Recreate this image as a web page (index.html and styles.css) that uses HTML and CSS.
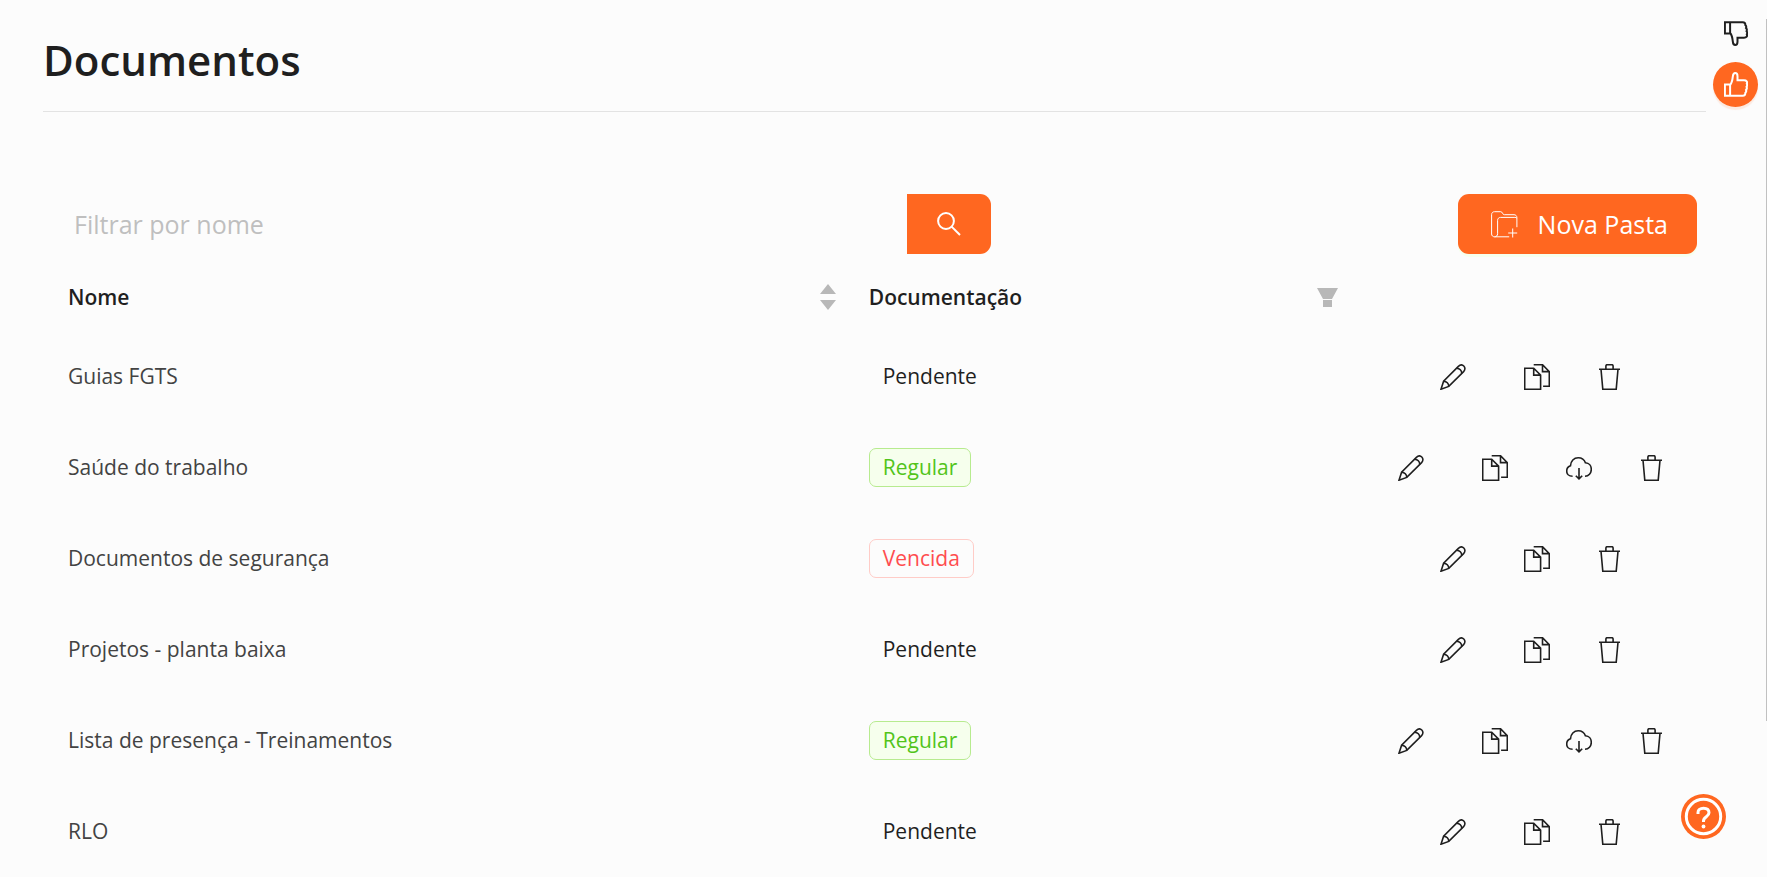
FILE: index.html
```
<!DOCTYPE html>
<html lang="pt-BR">
<head>
  <meta charset="UTF-8" />
  <meta name="viewport" content="width=device-width, initial-scale=1.0" />
  <title>Documentos</title>
  <link rel="stylesheet" href="styles.css">
</head>
<body>

  <!-- icons -->
  <svg class="sprite" aria-hidden="true">
    <symbol id="i-edit" viewBox="0 0 26 26">
      <path d="M1 25.2 3.6 17.2 18.4 2.4c1.6-1.6 3.8-2 5.4-.4s1.4 4-.2 5.6L8.8 22.4z" />
      <path d="M3.6 17.2c2.8.2 5 2.4 5.2 5.2M16.6 4.2c2.8.2 5 2.4 5.2 5.2" />
    </symbol>
    <symbol id="i-copy" viewBox="0 0 26 26">
      <path d="M.7 4.2h9l6.9 6.9v14.2H.7zM9.7 4.2v6.9h6.9" />
      <path d="M9.7.7h8.8l6.8 6.900v14.700h-6.200M18.500.700v6.900h6.800" />
    </symbol>
    <symbol id="i-cloud" viewBox="0 0 26 26">
      <path d="M6.6 21.3C2.8 21.3.7 18.9.7 16c0-2.6 1.5-4.4 3.800-5.200C4.600 6 8 2.700 12.200 2.700c3.600 0 6.200 2 7.200 5.100 3.600.200 5.900 3.100 5.900 6.500 0 4-2.700 6.900-6.300 7" />
      <path d="M13 13v10.800M9.800 20.700l3.200 3.200 3.200-3.200" />
    </symbol>
    <symbol id="i-trash" viewBox="0 0 21 26">
      <path d="M0 5.2h21M6.9 5V2q0-1.3 1.3-1.3h4.6q1.3 0 1.3 1.3v3M2 5.2l1.8 20.1h13.4L19 5.2" />
    </symbol>
    <symbol id="i-folder" viewBox="0 0 27 27">
      <path d="M3.500 25.800C1.800 25.800.6 24.600.6 23V3.600C.6 1.900 1.800.7 3.500.7h6.200c2 0 1.600 3 3.600 3H23c1.700 0 2.900 1.200 2.900 2.900v9.600" />
      <path d="M25.900 7.100c-.6-.6-1.200-.7-2-.7H9.500c-1.700 0-2.900 1.200-2.900 2.900V22.800c0 1.800-1.300 3-3.100 3h14.700M21.700 17.500v9M17.200 22h9" />
    </symbol>
    <symbol id="i-thumb" viewBox="0 0 24 25">
      <path d="M.9 12.500h5.200v11.300H.9zM6.100 13c2-2.400 2.300-4.300 2.700-8.300.2-2.400 1-3.700 2.400-3.700s2.300 1.200 2.300 3.200V8.300H20c2.600 0 3.600 1.600 2.800 3.400.6 1 .4 2.300-.3 3.100.6 1.100.3 2.400-.5 3.200.5 1 .1 2.200-.7 2.900.2 1.700-.8 2.900-2.500 2.900H6.100" />
    </symbol>
  </svg>

  <main class="page">
    <header class="page-header">
      <h1>Documentos</h1>
    </header>

    <div class="toolbar">
      <form class="search" onsubmit="return false">
        <input type="text" placeholder="Filtrar por nome" aria-label="Filtrar por nome" />
        <button type="submit" class="btn btn-search" aria-label="Buscar">
          <svg class="icon-search" viewBox="0 0 24 24"><circle cx="9" cy="9" r="7.9" /><path d="M14.6 14.6 23 23" /></svg>
        </button>
      </form>
      <button type="button" class="btn btn-new">
        <svg class="icon-folder"><use href="#i-folder" /></svg>
        Nova Pasta
      </button>
    </div>

    <table class="docs">
      <colgroup>
        <col class="col-name">
        <col class="col-status">
        <col class="col-actions">
      </colgroup>
      <thead>
        <tr>
          <th>
            <div class="th-inner">
              Nome
              <button type="button" class="th-btn" aria-label="Ordenar por nome">
                <svg class="icon-sort" viewBox="0 0 16 26"><path d="M8 0l8 10H0zM8 26l8-10H0z" /></svg>
              </button>
            </div>
          </th>
          <th>
            <div class="th-inner">
              Documentação
              <button type="button" class="th-btn" aria-label="Filtrar documentação">
                <svg class="icon-filter" viewBox="0 0 21 19"><path d="M0 0h21l-6 11H6zM6 12h9v7H6z" /></svg>
              </button>
            </div>
          </th>
          <th></th>
        </tr>
      </thead>
      <tbody>
        <tr>
          <td>Guias FGTS</td>
          <td><span class="tag">Pendente</span></td>
          <td>
            <div class="actions">
              <button type="button" aria-label="Editar"><svg><use href="#i-edit" /></svg></button>
              <button type="button" aria-label="Copiar"><svg><use href="#i-copy" /></svg></button>
              <button type="button" class="del" aria-label="Excluir"><svg><use href="#i-trash" /></svg></button>
            </div>
          </td>
        </tr>
        <tr>
          <td>Saúde do trabalho</td>
          <td><span class="tag tag-ok">Regular</span></td>
          <td>
            <div class="actions">
              <button type="button" aria-label="Editar"><svg><use href="#i-edit" /></svg></button>
              <button type="button" aria-label="Copiar"><svg><use href="#i-copy" /></svg></button>
              <button type="button" aria-label="Baixar"><svg><use href="#i-cloud" /></svg></button>
              <button type="button" class="del" aria-label="Excluir"><svg><use href="#i-trash" /></svg></button>
            </div>
          </td>
        </tr>
        <tr>
          <td>Documentos de segurança</td>
          <td><span class="tag tag-late">Vencida</span></td>
          <td>
            <div class="actions">
              <button type="button" aria-label="Editar"><svg><use href="#i-edit" /></svg></button>
              <button type="button" aria-label="Copiar"><svg><use href="#i-copy" /></svg></button>
              <button type="button" class="del" aria-label="Excluir"><svg><use href="#i-trash" /></svg></button>
            </div>
          </td>
        </tr>
        <tr>
          <td>Projetos - planta baixa</td>
          <td><span class="tag">Pendente</span></td>
          <td>
            <div class="actions">
              <button type="button" aria-label="Editar"><svg><use href="#i-edit" /></svg></button>
              <button type="button" aria-label="Copiar"><svg><use href="#i-copy" /></svg></button>
              <button type="button" class="del" aria-label="Excluir"><svg><use href="#i-trash" /></svg></button>
            </div>
          </td>
        </tr>
        <tr>
          <td>Lista de presença - Treinamentos</td>
          <td><span class="tag tag-ok">Regular</span></td>
          <td>
            <div class="actions">
              <button type="button" aria-label="Editar"><svg><use href="#i-edit" /></svg></button>
              <button type="button" aria-label="Copiar"><svg><use href="#i-copy" /></svg></button>
              <button type="button" aria-label="Baixar"><svg><use href="#i-cloud" /></svg></button>
              <button type="button" class="del" aria-label="Excluir"><svg><use href="#i-trash" /></svg></button>
            </div>
          </td>
        </tr>
        <tr>
          <td>RLO</td>
          <td><span class="tag">Pendente</span></td>
          <td>
            <div class="actions">
              <button type="button" aria-label="Editar"><svg><use href="#i-edit" /></svg></button>
              <button type="button" aria-label="Copiar"><svg><use href="#i-copy" /></svg></button>
              <button type="button" class="del" aria-label="Excluir"><svg><use href="#i-trash" /></svg></button>
            </div>
          </td>
        </tr>
      </tbody>
    </table>
  </main>

  <!-- floating buttons -->
  <div class="feedback">
    <button type="button" class="round" aria-label="Não gostei"><svg class="flip"><use href="#i-thumb" /></svg></button>
    <button type="button" class="round round-primary" aria-label="Gostei"><svg><use href="#i-thumb" /></svg></button>
  </div>
  <button type="button" class="help" aria-label="Ajuda">
    <svg viewBox="0 0 45 45">
      <circle class="help-bg" cx="22.5" cy="22.5" r="22.5" />
      <circle class="help-ring" cx="22.5" cy="22.5" r="17.2" />
      <path class="help-mark" d="M17 20v-1.500c0-2.600 2-4.300 5.500-4.300s5.500 1.900 5.500 4.600c0 4.200-5.500 3.700-5.500 8.200v1" />
      <circle class="help-dot" cx="22.5" cy="32.5" r="1.9" />
    </svg>
  </button>
  <div class="scroll-thumb"></div>

</body>
</html>
```

FILE: styles.css
```
* {
  margin: 0;
  padding: 0;
  box-sizing: border-box;
}

body {
  height: 100vh;
  overflow: hidden;
  background-color: #fcfcfc;
  color: #1f1f1f;
  font-family: 'Segoe UI', 'Open Sans', sans-serif;
  font-size: 21px;
  line-height: 37px;
}

button {
  font: inherit;
  color: inherit;
  background: none;
  border: none;
  cursor: pointer;
}

svg {
  display: block;
  fill: none;
  stroke: currentColor;
}

.sprite {
  display: none;
}

.page {
  padding: 28px 61px 0 43px;
}

.page-header {
  padding-bottom: 19px;
  border-bottom: 1px solid #e3e3e3;
}

h1 {
  font-size: 42px;
  line-height: 64px;
  font-weight: 600;
}

/* search + new folder */
.toolbar {
  display: flex;
  justify-content: space-between;
  margin-top: 82px;
  padding: 0 9px 0 15px;
}

.search {
  display: flex;
  width: 56.9%;
}

.search input {
  flex: 1;
  min-width: 0;
  padding: 0 16px;
  border: none;
  outline: none;
  background: transparent;
  color: inherit;
  font-family: inherit;
  font-size: 25px;
}

.search input::placeholder {
  color: #bfbfbf;
}

.btn {
  display: flex;
  align-items: center;
  justify-content: center;
  height: 60px;
  background-color: #ff6720;
  color: #fff;
}

.btn-search {
  width: 84px;
  border-radius: 0 11px 11px 0;
}

.btn-new {
  gap: 20px;
  padding: 0 29px 0 33px;
  border-radius: 11px;
  font-size: 25px;
  box-shadow: 0 3px 0 #f6ffed;
}

.icon-search {
  width: 24px;
  height: 24px;
  stroke-width: 2;
}

.icon-folder {
  width: 27px;
  height: 27px;
}

/* table */
.docs {
  width: 100%;
  table-layout: fixed;
  border-collapse: collapse;
}

.col-name { width: 48.15%; }
.col-status { width: 30.2%; }
.col-actions { width: 21.65%; }

th {
  height: 77px;
  padding: 9px 8px 0 25px;
  font-weight: 600;
  text-align: left;
}

.th-inner {
  display: flex;
  align-items: center;
  justify-content: space-between;
}

td {
  height: 91px;
  padding: 0 0 0 25px;
  color: #434343;
}

td:last-child {
  padding: 0;
}

.th-btn {
  color: #b8b8b8;
}

.th-btn svg {
  fill: currentColor;
  stroke: none;
}

.icon-sort {
  width: 16px;
  height: 26px;
}

.icon-filter {
  width: 21px;
  height: 19px;
}

.tag {
  display: inline-block;
  padding: 0 13px;
  border: 1px solid transparent;
  border-radius: 7px;
  color: #1f1f1f;
}

.tag-ok {
  color: #52c41a;
  background-color: #f6ffed;
  border-color: #b7eb8f;
}

.tag-late {
  color: #ff4d4f;
  border-color: #ffccc7;
}

.actions {
  display: flex;
  justify-content: center;
  color: #1f1f1f;
}

.actions button {
  display: flex;
  align-items: center;
  justify-content: center;
  width: 84px;
  height: 60px;
}

.actions .del {
  width: 62px;
}

.actions svg {
  width: 26px;
  height: 26px;
  stroke-width: 1.6;
}

.actions .del svg {
  width: 21px;
}

/* floating stuff over the page */
.feedback {
  position: fixed;
  top: 11px;
  right: 9px;
  display: flex;
  flex-direction: column;
  gap: 6px;
}

.round {
  display: flex;
  align-items: center;
  justify-content: center;
  width: 45px;
  height: 45px;
  border-radius: 50%;
}

.round svg {
  width: 24px;
  height: 25px;
  stroke-width: 2;
}

.flip {
  transform: scaleY(-1);
}

.round-primary {
  background-color: #ff6720;
  color: #fff;
  box-shadow: 0 3px 1px rgba(255, 103, 32, 0.12);
}

.help {
  position: fixed;
  right: 41px;
  bottom: 38px;
}

.help svg {
  width: 45px;
  height: 45px;
}

.help-bg {
  fill: #ff6720;
  stroke: none;
}

.help-ring {
  stroke: #fff;
  stroke-width: 3;
}

.help-mark {
  stroke: #fff;
  stroke-width: 3;
}

.help-dot {
  fill: #fff;
  stroke: none;
}

.scroll-thumb {
  position: fixed;
  top: 19px;
  right: 0;
  width: 1px;
  height: 80vh;
  background-color: #c1c1c1;
}
```
